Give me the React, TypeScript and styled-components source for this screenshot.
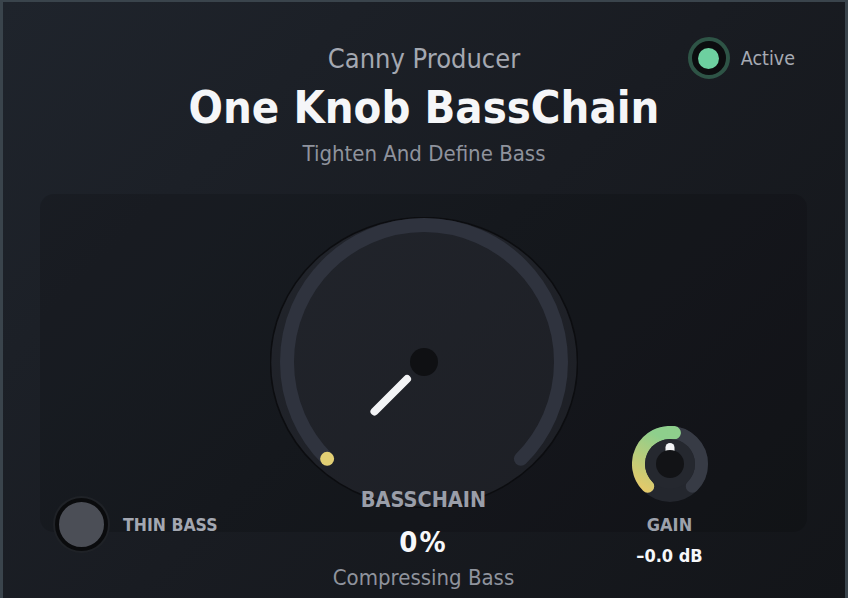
import styled, { createGlobalStyle } from 'styled-components'

const Global = createGlobalStyle`
  html, body {
    margin: 0;
    padding: 0;
    background: #3a444c;
  }
  * { box-sizing: border-box; }
`

const font = `"DejaVu Sans Condensed", "DejaVu Sans", sans-serif`

const Frame = styled.div`
  width: 848px;
  height: 598px;
  overflow: hidden;
  border-left: 3px solid #3a444c;
  border-right: 3px solid #3a444c;
  border-top: 2px solid #3a444c;
  background: linear-gradient(135deg, #1f242c 0%, #191c22 50%, #131519 100%);
  font-family: ${font};
  font-stretch: condensed;
  padding: 35px 0 0;
`

const Header = styled.header`
  display: grid;
  grid-template-columns: 1fr auto 1fr;
  align-items: start;
`

const TitleBlock = styled.div`
  grid-column: 2;
  display: flex;
  flex-direction: column;
  align-items: center;
  padding-top: 6px;
`

const Maker = styled.div`
  font-size: 27px;
  line-height: 32px;
  color: #a4a8b1;
`

const Title = styled.h1`
  margin: 7px 0 0;
  font-size: 45px;
  line-height: 52px;
  font-weight: 700;
  color: #f5f6f8;
`

const Subtitle = styled.div`
  margin-top: 7px;
  font-size: 22px;
  line-height: 26px;
  color: #8f939d;
`

const ActiveRow = styled.div`
  grid-column: 3;
  justify-self: end;
  margin-right: 50px;
  display: flex;
  align-items: center;
  gap: 11px;
  font-size: 19.5px;
  color: #a6aab3;
`

const Led = styled.div<{ $on: boolean }>`
  width: 42px;
  height: 42px;
  border-radius: 50%;
  border: 4.5px solid ${p => (p.$on ? '#2e5446' : '#2a2d33')};
  background: #0c0d0f;
  display: flex;
  align-items: center;
  justify-content: center;

  &::after {
    content: '';
    width: 21px;
    height: 21px;
    border-radius: 50%;
    background: ${p => (p.$on ? '#6dd0a0' : '#44474e')};
  }
`

const Panel = styled.section`
  margin: 27px 38px 0 37px;
  height: 338px;
  border-radius: 14px;
  background: rgba(0, 0, 0, 0.13);
  display: grid;
  grid-template-columns: 1fr 308px 1fr;
  align-items: start;
`

const SideLeft = styled.div`
  padding: 302px 0 0 13px;
  display: flex;
  align-items: center;
  gap: 13px;
`

const Toggle = styled.div<{ $on: boolean }>`
  width: 57px;
  height: 57px;
  border-radius: 50%;
  background: #1f2227;
  display: flex;
  align-items: center;
  justify-content: center;

  &::after {
    content: '';
    width: 45px;
    height: 45px;
    border-radius: 50%;
    border: 4px solid #0a0b0d;
    background: ${p => (p.$on ? '#e0cd72' : '#4b4e56')};
  }
`

const SmallLabel = styled.div`
  font-size: 17.5px;
  line-height: 22px;
  font-weight: 700;
  color: #a3a7b1;
`

const Center = styled.div`
  padding-top: 23px;
  display: flex;
  flex-direction: column;
  align-items: center;
`

const KnobName = styled.div`
  margin-top: -22px;
  font-size: 21.5px;
  line-height: 26px;
  font-weight: 700;
  color: #9a9ea9;
`

const Value = styled.div`
  margin-top: 13px;
  font-size: 29px;
  line-height: 32px;
  font-weight: 700;
  letter-spacing: 2px;
  color: #f7f8fa;
`

const Status = styled.div`
  margin-top: 7px;
  font-size: 22px;
  line-height: 26px;
  color: #8f939d;
`

const SideRight = styled.div`
  padding: 232px 0 0 54px;
`

const GainBlock = styled.div`
  width: 76px;
  display: flex;
  flex-direction: column;
  align-items: center;
`

const GainLabel = styled.div`
  margin-top: 12px;
  font-size: 18px;
  line-height: 22px;
  font-weight: 700;
  color: #9da1ab;
`

const GainValue = styled.div`
  margin-top: 9px;
  font-size: 18px;
  line-height: 22px;
  font-weight: 700;
  color: #f7f8fa;
  white-space: nowrap;
`

const pt = (cx: number, cy: number, r: number, deg: number) => {
  const a = (deg * Math.PI) / 180
  return [cx + r * Math.sin(a), cy - r * Math.cos(a)]
}

const arc = (cx: number, cy: number, r: number, from: number, to: number) => {
  const [x1, y1] = pt(cx, cy, r, from)
  const [x2, y2] = pt(cx, cy, r, to)
  const large = to - from > 180 ? 1 : 0
  return `M ${x1} ${y1} A ${r} ${r} 0 ${large} 1 ${x2} ${y2}`
}

function BigKnob({ value }: { value: number }) {
  const cx = 154
  const cy = 145
  const angle = -135 + value * 270
  const [sx, sy] = pt(cx, cy, 24, angle)
  const [ex, ey] = pt(cx, cy, 70, angle)
  const [dx, dy] = pt(cx, cy, 137, angle)
  return (
    <svg width="308" height="292" viewBox="0 0 308 292">
      <defs>
        <linearGradient id="body" x1="0" y1="0" x2="1" y2="1">
          <stop offset="0" stopColor="#21242b" />
          <stop offset="1" stopColor="#1d1f25" />
        </linearGradient>
      </defs>
      <ellipse cx={cx} cy={145.5} rx={153.5} ry={145} fill="url(#body)" stroke="#0c0d10" strokeWidth="1.5" />
      <path d={arc(cx, cy, 137, -135, 135)} fill="none" stroke="#2f333e" strokeWidth="14" strokeLinecap="round" />
      <circle cx={dx} cy={dy} r="7" fill="#e2cf74" />
      <circle cx={cx} cy={cy} r="14" fill="#0f1013" />
      <line x1={sx} y1={sy} x2={ex} y2={ey} stroke="#f3f4f6" strokeWidth="8" strokeLinecap="round" />
    </svg>
  )
}

function GainKnob() {
  const c = 38
  return (
    <svg width="76" height="76" viewBox="0 0 76 76">
      <defs>
        <linearGradient id="gainArc" x1="0" y1="1" x2="0.4" y2="0">
          <stop offset="0" stopColor="#e3c96a" />
          <stop offset="1" stopColor="#8ecf8c" />
        </linearGradient>
      </defs>
      <circle cx={c} cy={c} r="38" fill="#24272e" />
      <path d={arc(c, c, 31.5, -135, 135)} fill="none" stroke="#373b45" strokeWidth="13" strokeLinecap="round" />
      <path d={arc(c, c, 31.5, -135, 8)} fill="none" stroke="url(#gainArc)" strokeWidth="13" strokeLinecap="round" />
      <path d={arc(c, c, 31.5, -5, 8)} fill="none" stroke="#8ecf8c" strokeWidth="13" />
      <circle cx={c} cy={c} r="25" fill="#25282f" />
      <rect x={c - 4.5} y={17} width="9" height="12" rx="4.5" fill="#f4f5f7" />
      <circle cx={c} cy={c} r="14" fill="#121316" />
    </svg>
  )
}

export default function App() {
  return (
    <>
      <Global />
      <Frame>
        <Header>
          <TitleBlock>
            <Maker>Canny Producer</Maker>
            <Title>One Knob BassChain</Title>
            <Subtitle>Tighten And Define Bass</Subtitle>
          </TitleBlock>
          <ActiveRow>
            <Led $on />
            <span>Active</span>
          </ActiveRow>
        </Header>
        <Panel>
          <SideLeft>
            <Toggle $on={false} />
            <SmallLabel>THIN BASS</SmallLabel>
          </SideLeft>
          <Center>
            <BigKnob value={0} />
            <KnobName>BASSCHAIN</KnobName>
            <Value>0%</Value>
            <Status>Compressing Bass</Status>
          </Center>
          <SideRight>
            <GainBlock>
              <GainKnob />
              <GainLabel>GAIN</GainLabel>
              <GainValue>–0.0 dB</GainValue>
            </GainBlock>
          </SideRight>
        </Panel>
      </Frame>
    </>
  )
}
